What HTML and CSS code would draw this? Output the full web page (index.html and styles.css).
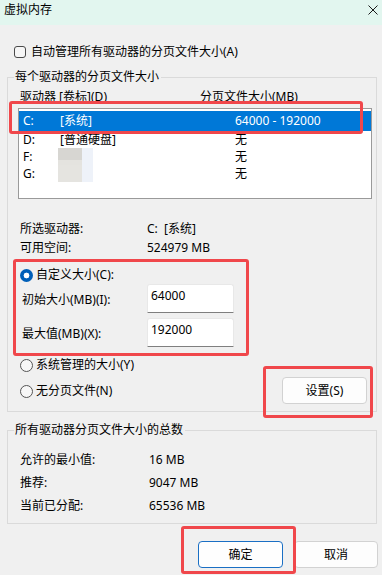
FILE: index.html
```html
<!DOCTYPE html>
<html lang="zh-CN">
<head>
<meta charset="utf-8">
<title>虚拟内存</title>
<link rel="stylesheet" href="styles.css">
</head>
<body>
<div class="window">
  <header class="titlebar">
    <span class="title">虚拟内存</span>
    <svg class="close" width="10" height="10" viewBox="0 0 10 10"><path d="M0.5 0.5 L9.5 9.5 M9.5 0.5 L0.5 9.5" stroke="#1a1a1a" stroke-width="1" fill="none"/></svg>
  </header>
  <main class="content">
    <div class="check-row"><span class="checkbox"></span><span>自动管理所有驱动器的分页文件大小(A)</span></div>

    <fieldset class="group group-drives">
      <legend>每个驱动器的分页文件大小</legend>
      <div class="list-head"><span>驱动器 [卷标](D)</span><span>分页文件大小(MB)</span></div>
      <div class="list">
        <div class="row selected"><span>C:</span><span>[系统]</span><span>64000 - 192000</span></div>
        <div class="row"><span>D:</span><span>[普通硬盘]</span><span>无</span></div>
        <div class="row"><span>F:</span><span class="redact"><i class="r1"></i><i class="r2"></i></span><span>无</span></div>
        <div class="row"><span>G:</span><span class="redact"><i class="r3"></i><i class="r2"></i></span><span>无</span></div>
      </div>

      <div class="info">
        <span>所选驱动器:</span><span>C:&nbsp;&nbsp;[系统]</span>
        <span>可用空间:</span><span>524979 MB</span>
      </div>

      <div class="custom">
        <div class="radio-row"><span class="radio checked"></span><span>自定义大小(C):</span></div>
        <div class="field-row"><span class="field-label">初始大小(MB)(I):</span><div class="input">64000</div></div>
        <div class="field-row"><span class="field-label">最大值(MB)(X):</span><div class="input">192000</div></div>
      </div>

      <div class="bottom-row">
        <div class="radios">
          <div class="radio-row"><span class="radio"></span><span>系统管理的大小(Y)</span></div>
          <div class="radio-row"><span class="radio"></span><span>无分页文件(N)</span></div>
        </div>
        <button class="btn btn-set">设置(S)</button>
      </div>
    </fieldset>

    <fieldset class="group group-total">
      <legend>所有驱动器分页文件大小的总数</legend>
      <div class="totals">
        <span>允许的最小值:</span><span>16 MB</span>
        <span>推荐:</span><span>9047 MB</span>
        <span>当前已分配:</span><span>65536 MB</span>
      </div>
    </fieldset>

    <div class="actions">
      <button class="btn primary">确定</button>
      <button class="btn">取消</button>
    </div>
  </main>

  <div class="mark mark-c"></div>
  <div class="mark mark-custom"></div>
  <div class="mark mark-set"></div>
  <div class="mark mark-ok"></div>
</div>
</body>
</html>
```

FILE: styles.css
```css
* { box-sizing: border-box; }
html, body { margin: 0; padding: 0; }
body {
  width: 382px;
  height: 575px;
  overflow: hidden;
  background: #f0f0f0;
  font-family: "Noto Sans", "Noto Sans CJK SC", sans-serif;
  font-size: 12px;
  color: #000;
}
.window { position: relative; width: 382px; height: 575px; }

.titlebar {
  height: 25px;
  background: #e2f6ef;
  display: flex;
  align-items: center;
  justify-content: space-between;
  padding: 0 4px 0 4px;
}
.title { line-height: 16px; margin-top: -5px; }
.close { margin-right: 0; margin-top: -6px; }

.content { padding: 0 5px 0 7px; }

.check-row {
  margin-top: 18px;
  height: 18px;
  line-height: 18px;
  display: flex;
  align-items: center;
  padding-left: 7px;
}
.checkbox {
  width: 12px; height: 12px;
  border: 1px solid #4a4a4a;
  border-radius: 3px;
  background: #f6f6f6;
  margin-right: 5px;
}

.group {
  margin: 0;
  padding: 0;
  border: 1px solid #dadada;
  min-width: 0;
  width: 370px;
}
.group legend {
  margin-left: 6px;
  padding: 0 2px 0 1px;
  line-height: 16px;
}
.group-drives { margin-top: 8px; padding-bottom: 7px; }
.group-total { margin-top: 10px; padding-bottom: 6px; }

.list-head {
  margin-top: 4px;
  line-height: 16px;
  display: grid;
  grid-template-columns: 180px 1fr;
  padding-left: 12px;
}

.list {
  margin: 3px 4px 0 10px;
  height: 91px;
  border: 1px solid #9a9a9a;
  background: #fff;
  padding-top: 2px;
}
.row {
  display: grid;
  grid-template-columns: 37px 175px 1fr;
  padding-left: 4px;
  height: 17px;
  line-height: 17px;
}
.row.selected {
  height: 20px;
  line-height: 20px;
  background: #0078d7;
  color: #fff;
}
.redact { display: flex; height: 17px; margin-left: -2px; }
.redact i { display: block; height: 17px; }
.redact .r1 { width: 24px; background: linear-gradient(#d7d6d2 0 70%, #e4e3df 70%); }
.redact .r3 { width: 24px; background: #e5e4e0; }
.redact .r2 { width: 11px; background: #eef2f9; }

.info {
  margin-top: 20px;
  display: grid;
  grid-template-columns: 127px 1fr;
  padding-left: 12px;
  line-height: 19px;
}

.custom { margin-top: 9px; padding-left: 12px; }
.radio-row {
  display: flex;
  align-items: center;
  height: 18px;
  line-height: 18px;
}
.radio {
  width: 13px; height: 13px;
  border-radius: 50%;
  border: 1px solid #555;
  background: #f7f7f7;
  margin-right: 3px;
  flex: none;
}
.radio.checked {
  border: none;
  background: radial-gradient(circle, #fff 0 2.6px, #005fb8 3.2px);
}
.field-row {
  display: flex;
  align-items: center;
  height: 29px;
  padding-left: 2px;
}
.field-row + .field-row { margin-top: 5px; }
.field-label { width: 125px; }
.input {
  width: 87px;
  height: 29px;
  background: #fff;
  border: 1px solid #e8e8e8;
  border-bottom: 1px solid #7f7f7f;
  border-radius: 3px 3px 0 0;
  padding: 2px 0 0 3px;
  line-height: 18px;
}

.bottom-row {
  margin-top: 9px;
  display: flex;
  justify-content: space-between;
  align-items: flex-start;
  padding-left: 12px;
}
.radios { display: flex; flex-direction: column; gap: 8px; }

.btn {
  font: inherit;
  color: #000;
  background: #fdfdfd;
  border: 1px solid #d2d2d2;
  border-radius: 4px;
  height: 27px;
  padding: 0;
  line-height: 25px;
  text-align: center;
}
.btn-set { width: 85px; margin-top: 21px; margin-right: 9px; }

.totals {
  padding: 10px 0 0 12px;
  display: grid;
  grid-template-columns: 129px 1fr;
  grid-auto-rows: 23px;
  line-height: 23px;
}

.actions {
  margin-top: 17px;
  display: flex;
  justify-content: flex-end;
  gap: 11px;
  margin-right: -1px;
}
.actions .btn { width: 85px; }
.actions .btn + .btn { width: 84px; }
.btn.primary { border-color: #1a6fc4; background: #fefefe; }

.mark {
  position: absolute;
  border: 3px solid #f0474b;
  border-radius: 3px;
}
.mark-c { left: 9px; top: 101px; width: 354px; height: 33px; }
.mark-custom { left: 13px; top: 259px; width: 236px; height: 97px; }
.mark-set { left: 263px; top: 366px; width: 110px; height: 52px; }
.mark-ok { left: 181px; top: 526px; width: 115px; height: 48px; }
```
